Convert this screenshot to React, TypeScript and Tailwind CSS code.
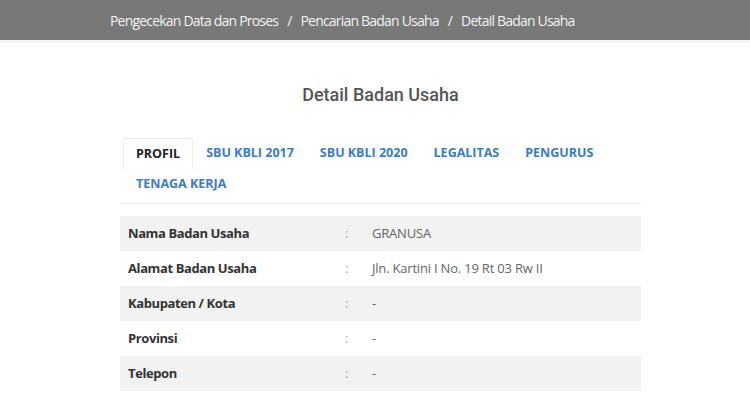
const tabs = ["PROFIL", "SBU KBLI 2017", "SBU KBLI 2020", "LEGALITAS", "PENGURUS", "TENAGA KERJA"];

const rows: [string, string][] = [
  ["Nama Badan Usaha", "GRANUSA"],
  ["Alamat Badan Usaha", "Jln. Kartini I No. 19 Rt 03 Rw II"],
  ["Kabupaten / Kota", "-"],
  ["Provinsi", "-"],
  ["Telepon", "-"],
];

export default function App() {
  return (
    <div className="w-[750px] h-[400px] overflow-hidden bg-white font-['Open_Sans',sans-serif]">
      {/* Breadcrumb bar */}
      <div className="h-[40px] bg-[#787878] flex items-center pl-[110px] text-[14px] text-[#f2f2f2] tracking-[-0.8px]">
        <span>Pengecekan Data dan Proses</span>
        <span className="px-[9px]">/</span>
        <span>Pencarian Badan Usaha</span>
        <span className="px-[9px]">/</span>
        <span>Detail Badan Usaha</span>
      </div>
      <div className="h-[3px] bg-[#f7f7f7]" />

      <div className="ml-[120px] w-[521px]">
        <h2 className="mt-[40px] text-center font-['Roboto',sans-serif] font-medium text-[18px] leading-[24px] text-[#555]">
          Detail Badan Usaha
        </h2>

        {/* Tabs */}
        <div className="mt-[31px] flex flex-wrap pl-[3px] pb-[3px] border-b border-[#eeeeee]">
          {tabs.map((t, i) => (
            <div
              key={t}
              className={`h-[31px] flex items-center px-[12px] text-[12.5px] font-bold ${
                i === 0
                  ? "text-[#222] border border-b-0 border-[#ececec] rounded-t-[3px]"
                  : "text-[#3a7cc0] border border-transparent"
              }`}
            >
              {t}
            </div>
          ))}
        </div>

        {/* Detail table */}
        <div className="mt-[12px]">
          {rows.map(([label, value], i) => (
            <div
              key={label}
              className={`grid grid-cols-[217px_27px_1fr] h-[35px] items-center text-[13px] ${
                i % 2 === 0 ? "bg-[#f2f2f2]" : "bg-white"
              }`}
            >
              <div className="pl-2 font-bold text-[#333] tracking-[-0.4px]">{label}</div>
              <div className="pl-2 text-[#aaa]">:</div>
              <div className="pl-2 text-[#666] tracking-[-0.2px]">{value}</div>
            </div>
          ))}
        </div>
      </div>
    </div>
  );
}
